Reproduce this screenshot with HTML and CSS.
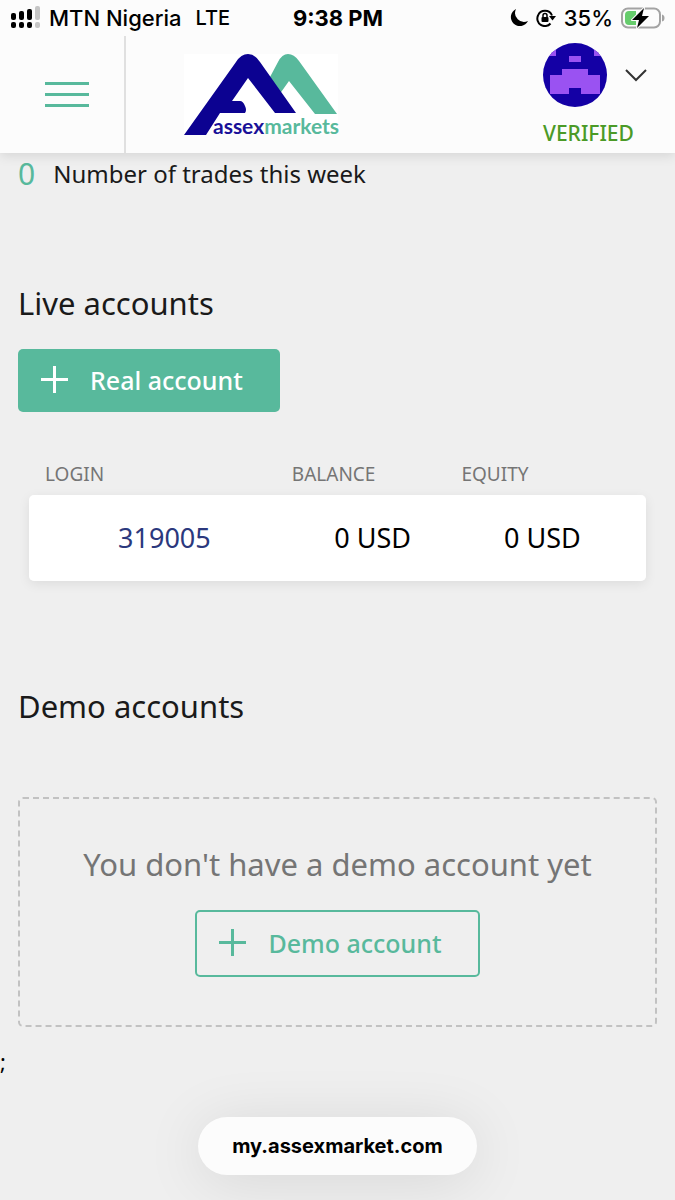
FILE: index.html
```html
<!DOCTYPE html>
<html lang="en">

<head>
    <meta charset="UTF-8">
    <meta name="viewport" content="width=device-width, initial-scale=1.0">
    <title>Assexmarkets</title>
    <link rel="stylesheet" href="styles.css">
</head>

<body>
    <header class="top">
        <div class="status-bar">
            <div class="status-left">
                <svg class="signal" width="30" height="24" viewBox="0 0 30 24">
                    <g fill="#000">
                        <rect x="0" y="7" width="5" height="7" rx="2" />
                        <rect x="8" y="5" width="5" height="9" rx="2" />
                        <rect x="16" y="3" width="5" height="11" rx="2" />
                        <rect x="0" y="16" width="5" height="6" rx="2" />
                        <rect x="8" y="16" width="5" height="6" rx="2" />
                        <rect x="16" y="16" width="5" height="6" rx="2" />
                    </g>
                    <g fill="#c6c6c6">
                        <rect x="24" y="0" width="5" height="14" rx="2" />
                        <rect x="24" y="16" width="5" height="6" rx="2" />
                    </g>
                </svg>
                <span>MTN Nigeria</span>
                <span class="network">LTE</span>
            </div>
            <div class="clock">9:38 PM</div>
            <div class="status-right">
                <svg width="18" height="18" viewBox="0 0 18 18">
                    <path d="M6 0A9 9 0 1 0 18 12A9 9 0 0 1 6 0Z" fill="#000" />
                </svg>
                <svg class="lock" width="20" height="18" viewBox="0 0 20 18">
                    <path d="M16 6.500A7.500 7.500 0 0 0 2 6.500A7.500 7.500 0 0 0 14.500 14.500" fill="none" stroke="#000" stroke-width="2" />
                    <path d="M13 7H20L16.500 11.500Z" fill="#000" />
                    <rect x="5.500" y="8" width="7" height="5" rx="1" fill="#000" />
                    <path d="M7 8V6.500A2 2 0 0 1 11 6.500V8" fill="none" stroke="#000" stroke-width="1.500" />
                </svg>
                <span>35%</span>
                <svg class="battery" width="44" height="22" viewBox="0 0 44 22">
                    <rect x="1" y="1.500" width="38" height="19" rx="6" fill="none" stroke="#a3a3a3" stroke-width="2" />
                    <path d="M41 7.500Q43.500 8 43.500 11T41 14.500Z" fill="#a3a3a3" />
                    <path d="M8 4H15V18H8Q4 18 4 14V8Q4 4 8 4Z" fill="#66cc6c" />
                    <path d="M23 1L11 13H18L16 21L28 9H21Z" fill="#000" stroke="#fcfcfc" stroke-width="2" paint-order="stroke" stroke-linejoin="round" />
                </svg>
            </div>
        </div>

        <div class="nav">
            <button class="menu" type="button" aria-label="Menu">
                <svg width="44" height="25" viewBox="0 0 44 25">
                    <path d="M0 1.500H44M0 12.500H44M0 23.500H44" stroke="#58b99c" stroke-width="3" />
                </svg>
            </button>

            <a class="logo" href="#" aria-label="assexmarkets">
                <svg width="160" height="90" viewBox="0 0 160 90">
                    <rect width="154" height="80" fill="#fff" />
                    <path d="M86 23L94 8Q98 0 104 0Q110 0 115 7L153 60H131L105 27L95 41Z" fill="#58b99c" />
                    <path d="M0 81L52 8Q57 0 64 0Q71 0 76 8L112 59H91L64 24L48 47H56Q59 47 61 52Q63 56 61 59H36L22 81Z" fill="#0c0291" />
                    <text class="logo-text" x="29" y="80"><tspan fill="#1a1198">assex</tspan><tspan fill="#58b99c">markets</tspan></text>
                </svg>
            </a>

            <button class="profile" type="button">
                <span class="profile-row">
                    <svg class="avatar" width="64" height="64" viewBox="0 0 64 64">
                        <defs>
                            <clipPath id="round">
                                <circle cx="32" cy="32" r="32" />
                            </clipPath>
                        </defs>
                        <g clip-path="url(#round)">
                            <rect width="64" height="64" fill="#1400a5" />
                            <path d="M0 6H13V13H0ZM51 6H64V13H51ZM26 13H38V19H26ZM19 26H45V32H57V51H38V45H26V51H7V32H19Z" fill="#9a52f2" />
                        </g>
                    </svg>
                    <svg width="22" height="14" viewBox="0 0 22 14">
                        <path d="M1 2L11 12L21 2" fill="none" stroke="#333" stroke-width="2" />
                    </svg>
                </span>
                <span class="verified">VERIFIED</span>
            </button>
        </div>
    </header>

    <main class="content">
        <div class="trades">
            <span class="trades-count">0</span>
            <span>Number of trades this week</span>
        </div>

        <section class="live">
            <h2>Live accounts</h2>
            <button class="btn btn-real" type="button">
                <svg width="27" height="27" viewBox="0 0 27 27">
                    <path d="M13.500 0V27M0 13.500H27" stroke="currentColor" stroke-width="3" />
                </svg>
                Real account
            </button>

            <table class="accounts">
                <thead>
                    <tr>
                        <th class="col-login">LOGIN</th>
                        <th class="col-money">BALANCE</th>
                        <th class="col-money">EQUITY</th>
                        <th></th>
                    </tr>
                </thead>
                <tbody>
                    <tr>
                        <td><a href="#">319005</a></td>
                        <td>0 USD</td>
                        <td>0 USD</td>
                        <td></td>
                    </tr>
                </tbody>
            </table>
        </section>

        <section class="demo">
            <h2>Demo accounts</h2>
            <div class="empty">
                <p>You don't have a demo account yet</p>
                <button class="btn btn-demo" type="button">
                    <svg width="27" height="27" viewBox="0 0 27 27">
                        <path d="M13.500 0V27M0 13.500H27" stroke="currentColor" stroke-width="3" />
                    </svg>
                    Demo account
                </button>
            </div>
        </section>
    </main>

    <div class="stray">;</div>

    <footer class="browser-bar">
        <a class="address" href="#">my.assexmarket.com</a>
    </footer>
</body>

</html>
```
FILE: styles.css
```css
* {
    box-sizing: border-box;
}

body {
    margin: 0;
    background-color: #efefef;
    color: #1a1a1a;
    font-family: "Noto Sans", sans-serif;
    overflow-x: hidden;
}

a {
    text-decoration: none;
}

button {
    border: none;
    background: none;
    padding: 0;
    font-family: inherit;
    cursor: pointer;
}

svg {
    display: block;
    flex: none;
}

.top {
    position: relative;
    background-color: #fcfcfc;
    box-shadow: 0 2px 12px rgba(0, 0, 0, 0.12);
}

/* status bar */

.status-bar {
    display: grid;
    grid-template-columns: 1fr auto 1fr;
    align-items: center;
    height: 36px;
    padding: 0 10px 0 11px;
    color: #000;
    font-family: Inter, sans-serif;
    font-size: 22px;
    font-weight: 500;
}

.status-left,
.status-right {
    display: flex;
    align-items: center;
    gap: 8px;
}

.status-right {
    justify-content: flex-end;
}

.network {
    margin-left: 6px;
    font-size: 20px;
}

.clock {
    font-weight: 700;
}

/* navigation */

.nav {
    display: flex;
    height: 117px;
}

.menu {
    display: flex;
    align-items: center;
    width: 126px;
    padding-left: 45px;
    border-right: 2px solid #e0e0e0;
}

.logo {
    padding: 18px 0 0 58px;
}

.logo-text {
    font-family: Lato, sans-serif;
    font-size: 21px;
    font-weight: 700;
}

.profile {
    display: flex;
    flex-direction: column;
    align-items: flex-start;
    gap: 12px;
    margin-left: auto;
    padding: 7px 28px 0 0;
}

.profile-row {
    display: flex;
    align-items: center;
    gap: 18px;
}

.verified {
    color: #4b9a27;
    font-size: 21px;
    font-weight: 500;
    line-height: 28px;
}

/* content */

.content {
    padding: 0 18px;
}

.trades {
    display: flex;
    align-items: center;
    gap: 18px;
    height: 40px;
    font-size: 24px;
}

.trades-count {
    color: #58b99c;
    font-size: 30px;
}

h2 {
    margin: 0;
    font-size: 31px;
    font-weight: 400;
    line-height: 44px;
}

.live {
    padding-top: 88px;
}

.btn {
    display: flex;
    align-items: center;
    gap: 22px;
    border-radius: 5px;
    font-size: 25px;
    font-weight: 500;
}

.btn-real {
    height: 63px;
    margin-top: 24px;
    padding: 0 37px 2px 23px;
    background-color: #58b99c;
    color: #fff;
}

.btn-demo {
    height: 67px;
    padding: 0 36px 2px 22px;
    border: 2px solid #58b99c;
    color: #58b99c;
}

.accounts {
    width: calc(100% - 22px);
    margin: 42px auto 0 11px;
    border-spacing: 0;
    table-layout: fixed;
}

th {
    height: 41px;
    padding: 0 0 2px 16px;
    color: #757575;
    font-size: 19px;
    font-weight: 400;
    text-align: left;
}

.col-login {
    width: 40%;
}

.col-money {
    width: 27.5%;
}

tbody {
    border-radius: 5px;
    box-shadow: 0 3px 12px rgba(0, 0, 0, 0.08);
}

td {
    height: 86px;
    padding: 0 0 2px 24px;
    background-color: #fff;
    color: #000;
    font-size: 27px;
    text-align: center;
}

td:first-child {
    border-radius: 5px 0 0 5px;
}

td:last-child {
    border-radius: 0 5px 5px 0;
}

td a {
    color: #2b387d;
}

.demo {
    padding-top: 103px;
}

.empty {
    display: flex;
    flex-direction: column;
    align-items: center;
    margin-top: 69px;
    padding: 43px 16px 48px;
    border: 2px dashed #c2c2c2;
    border-radius: 5px;
}

.empty p {
    margin: 0 0 24px;
    color: #757575;
    font-size: 31px;
    line-height: 44px;
    text-align: center;
}

.stray {
    color: #000;
    font-size: 22px;
    line-height: 30px;
    margin-top: 19px;
}

/* floating address */

.browser-bar {
    display: flex;
    justify-content: center;
    padding: 41px 0 25px;
}

.address {
    padding: 0 34px;
    border-radius: 29px;
    background-color: #fcfcfc;
    box-shadow: 0 6px 60px rgba(0, 0, 0, 0.1);
    color: #000;
    font-family: Inter, sans-serif;
    font-size: 20px;
    font-weight: 700;
    line-height: 58px;
}
```
